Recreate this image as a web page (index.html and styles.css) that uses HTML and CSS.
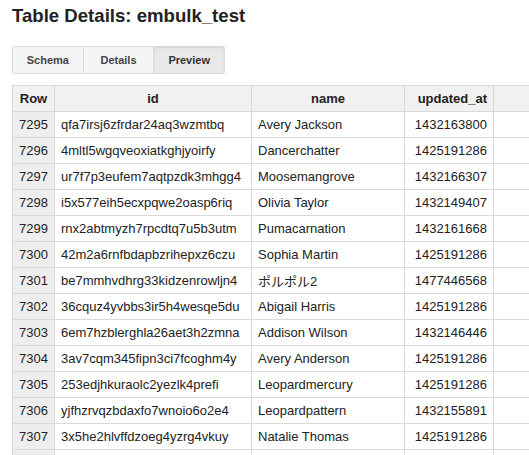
FILE: index.html
```html
<!DOCTYPE html>
<html>
<head>
<meta charset="utf-8">
<link rel="stylesheet" href="styles.css">
</head>
<body>
<h1 class="title">Table Details: embulk_test</h1>
<div class="tabs">
  <div class="tab">Schema</div>
  <div class="tab">Details</div>
  <div class="tab active">Preview</div>
</div>
<table class="grid">
  <colgroup>
    <col class="c-row"><col class="c-id"><col class="c-name"><col class="c-upd"><col class="c-extra">
  </colgroup>
  <thead>
    <tr><th>Row</th><th>id</th><th>name</th><th class="num">updated_at</th><th></th></tr>
  </thead>
  <tbody>
    <tr><td class="rn">7295</td><td>qfa7irsj6zfrdar24aq3wzmtbq</td><td>Avery Jackson</td><td class="num">1432163800</td><td></td></tr>
    <tr><td class="rn">7296</td><td>4mltl5wgqveoxiatkghjyoirfy</td><td>Dancerchatter</td><td class="num">1425191286</td><td></td></tr>
    <tr><td class="rn">7297</td><td>ur7f7p3eufem7aqtpzdk3mhgg4</td><td>Moosemangrove</td><td class="num">1432166307</td><td></td></tr>
    <tr><td class="rn">7298</td><td>i5x577eih5ecxpqwe2oasp6riq</td><td>Olivia Taylor</td><td class="num">1432149407</td><td></td></tr>
    <tr><td class="rn">7299</td><td>rnx2abtmyzh7rpcdtq7u5b3utm</td><td>Pumacarnation</td><td class="num">1432161668</td><td></td></tr>
    <tr><td class="rn">7300</td><td>42m2a6rnfbdapbzrihepxz6czu</td><td>Sophia Martin</td><td class="num">1425191286</td><td></td></tr>
    <tr><td class="rn">7301</td><td>be7mmhvdhrg33kidzenrowljn4</td><td>ポルポル2</td><td class="num">1477446568</td><td></td></tr>
    <tr><td class="rn">7302</td><td>36cquz4yvbbs3ir5h4wesqe5du</td><td>Abigail Harris</td><td class="num">1425191286</td><td></td></tr>
    <tr><td class="rn">7303</td><td>6em7hzblerghla26aet3h2zmna</td><td>Addison Wilson</td><td class="num">1432146446</td><td></td></tr>
    <tr><td class="rn">7304</td><td>3av7cqm345fipn3ci7fcoghm4y</td><td>Avery Anderson</td><td class="num">1425191286</td><td></td></tr>
    <tr><td class="rn">7305</td><td>253edjhkuraolc2yezlk4prefi</td><td>Leopardmercury</td><td class="num">1425191286</td><td></td></tr>
    <tr><td class="rn">7306</td><td>yjfhzrvqzbdaxfo7wnoio6o2e4</td><td>Leopardpattern</td><td class="num">1432155891</td><td></td></tr>
    <tr><td class="rn">7307</td><td>3x5he2hlvffdzoeg4yzrg4vkuy</td><td>Natalie Thomas</td><td class="num">1425191286</td><td></td></tr>
    <tr><td class="rn"></td><td></td><td></td><td class="num"></td><td></td></tr>
  </tbody>
</table>
</body>
</html>
```
FILE: styles.css
```css
html, body {
  margin: 0;
  padding: 0;
  overflow: hidden;
  background: #fff;
}
body {
  padding: 0 12px;
  font-family: "Liberation Sans", Arial, "Noto Sans CJK JP", sans-serif;
  color: #222;
  width: 600px;
}
.title {
  margin: 0;
  padding-top: 4px;
  font-size: 18.6px;
  line-height: 24px;
  font-weight: bold;
  color: #222;
}
.tabs {
  display: flex;
  margin-top: 18px;
  width: 213px;
  height: 28px;
  border: 1px solid #dcdcdc;
  border-radius: 2px;
  box-sizing: border-box;
  background: #f5f5f5;
  overflow: hidden;
}
.tab {
  flex: 1;
  display: flex;
  align-items: center;
  justify-content: center;
  font-size: 11px;
  font-weight: bold;
  color: #444;
  border-left: 1px solid #dcdcdc;
}
.tab:first-child { border-left: none; }
.tab.active {
  background: #e8e8e8;
  box-shadow: inset 0 1px 2px rgba(0,0,0,0.1);
  color: #333;
}
.grid {
  margin-top: 11px;
  border-collapse: collapse;
  table-layout: fixed;
  width: 570px;
  font-size: 13px;
}
.c-row { width: 42px; }
.c-id { width: 197px; }
.c-name { width: 153px; }
.c-upd { width: 89px; }
.c-extra { width: 89px; }
.grid th, .grid td {
  border: 1px solid #dadada;
  height: 25px;
  padding: 0 6px;
  text-align: left;
  white-space: nowrap;
  overflow: hidden;
  color: #222;
}
.grid th {
  background: #f1f1f1;
  text-align: center;
  font-weight: bold;
}
.grid td.rn {
  background: #eeeeee;
  text-align: center;
  padding: 0;
}
.grid .num { text-align: right; }
.grid th.num { text-align: right; }
```
